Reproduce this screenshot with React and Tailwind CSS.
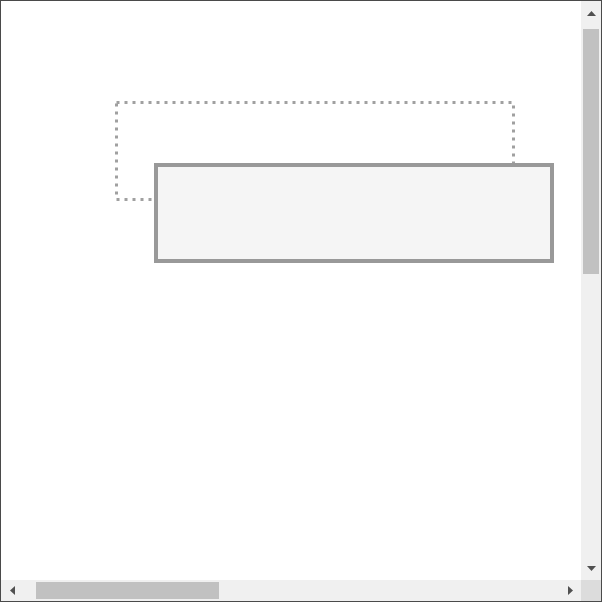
import React from 'react';

function Arrow({ dir }) {
  const pts = {
    up: '0,5 4.5,0 9,5',
    down: '0,0 9,0 4.5,5',
    left: '5,0 5,9 0,4.5',
    right: '0,0 5,4.5 0,9',
  }[dir];
  const vertical = dir === 'up' || dir === 'down';
  return (
    <svg width={vertical ? 9 : 5} height={vertical ? 5 : 9} viewBox={vertical ? '0 0 9 5' : '0 0 5 9'}>
      <polygon points={pts} fill="#505050" />
    </svg>
  );
}

export default function App() {
  return (
    <div className="w-[602px] h-[602px] border border-[#4a4a4a] flex flex-col bg-white overflow-hidden">
      <div className="flex h-[579px]">
        <div className="flex-1 bg-white">
          <div className="relative ml-[114px] mt-[100px] w-[400px] h-[100px]">
            <svg className="absolute inset-0" width="400" height="100">
              <rect
                x="1.5"
                y="1.5"
                width="397"
                height="97"
                fill="none"
                stroke="#a0a0a0"
                strokeWidth="3"
                strokeDasharray="3 5"
              />
            </svg>
            <div className="absolute left-[39px] top-[62px] w-[400px] h-[100px] border-4 border-[#999999] bg-[#f5f5f5]" />
          </div>
        </div>
        <div className="w-[20px] bg-[#f0f0f0] flex flex-col">
          <div className="h-[24px] flex items-center justify-center">
            <Arrow dir="up" />
          </div>
          <div className="mt-[4px] mx-[2px] h-[245px] bg-[#c1c1c1]" />
          <div className="flex-1" />
          <div className="h-[24px] flex items-center justify-center">
            <Arrow dir="down" />
          </div>
        </div>
      </div>
      <div className="flex h-[21px]">
        <div className="flex-1 bg-[#f0f0f0] flex">
          <div className="w-[22px] flex items-center justify-center">
            <Arrow dir="left" />
          </div>
          <div className="ml-[13px] my-[2px] w-[183px] bg-[#c1c1c1]" />
          <div className="flex-1" />
          <div className="w-[22px] flex items-center justify-center">
            <Arrow dir="right" />
          </div>
        </div>
        <div className="w-[20px] bg-[#dcdcdc]" />
      </div>
    </div>
  );
}
